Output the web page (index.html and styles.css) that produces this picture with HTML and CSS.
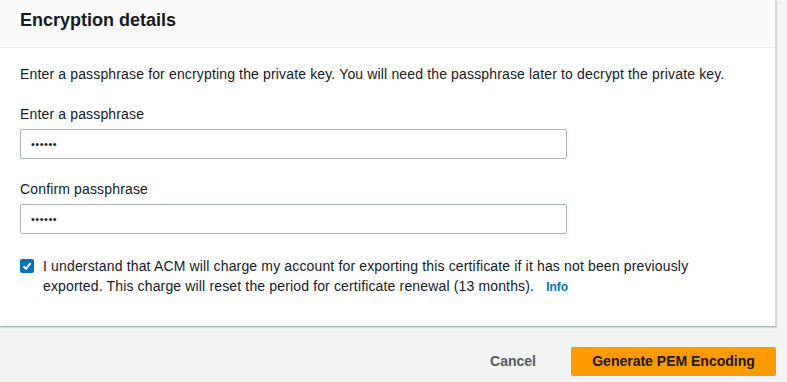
FILE: index.html
```html
<!DOCTYPE html>
<html lang="en">
<head>
  <meta charset="UTF-8">
  <meta name="viewport" content="width=device-width, initial-scale=1.0">
  <title>Export certificate</title>
  <link rel="stylesheet" href="styles.css">
</head>
<body>

<div class="panel">
  <div class="panel-header">
    <h2>Encryption details</h2>
  </div>

  <div class="panel-body">
    <p class="intro">Enter a passphrase for encrypting the private key. You will need the passphrase later to decrypt the private key.</p>

    <div class="field">
      <label for="passphrase">Enter a passphrase</label>
      <input type="password" id="passphrase" class="input-field" value="secret">
    </div>

    <div class="field">
      <label for="confirmPassphrase">Confirm passphrase</label>
      <input type="password" id="confirmPassphrase" class="input-field" value="secret">
    </div>

    <!-- Export charge acknowledgement -->
    <div class="ack">
      <span class="checkbox">
        <svg width="14" height="14" viewBox="0 0 14 14">
          <rect width="14" height="14" rx="2" fill="#0073bb"/>
          <path d="M3.5 7.2 L6 9.8 L10.6 4.2" fill="none" stroke="#fff" stroke-width="2"/>
        </svg>
      </span>
      <p>I understand that ACM will charge my account for exporting this certificate if it has not been previously exported. This charge will reset the period for certificate renewal (13 months). <a href="#" class="info-link">Info</a></p>
    </div>
  </div>
</div>

<div class="actions">
  <button class="cancel-btn">Cancel</button>
  <button class="primary-btn">Generate PEM Encoding</button>
</div>

</body>
</html>
```

FILE: styles.css
```css
body {
  margin: 0;
  font-family: "Liberation Sans", Arial, sans-serif;
  font-size: 14px;
  line-height: 20px;
  color: #16191f;
  background-color: #f2f3f3;
}

.panel {
  width: 775px;
  background-color: #fff;
  border-right: 1px solid #d5dbdb;
  border-bottom: 1px solid #aab7b8;
  box-shadow: 1px 1px 1px 0 rgba(0, 28, 36, 0.12);
}

.panel-header {
  height: 47px;
  background-color: #fafafa;
  border-bottom: 1px solid #eaeded;
  padding: 0 20px;
}

.panel-header h2 {
  margin: 0;
  padding-top: 8px;
  font-size: 18px;
  line-height: 24px;
  font-weight: bold;
}

.panel-body {
  padding: 16px 20px 29px;
  letter-spacing: 0.15px;
}

.intro {
  margin: 0 0 20px;
}

.field {
  margin-bottom: 20px;
}

.field label {
  display: block;
  margin-bottom: 5px;
}

.input-field {
  display: block;
  width: 547px;
  height: 30px;
  padding: 0 10px;
  border: 1px solid #aab7b8;
  border-radius: 2px;
  box-sizing: border-box;
  font-family: inherit;
  font-size: 11px;
  color: #16191f;
  letter-spacing: 0.5px;
}

.ack {
  display: flex;
  gap: 9px;
  padding-top: 2px;
}

.checkbox {
  flex: none;
  width: 14px;
  height: 14px;
  margin-top: 3px;
}

.checkbox svg {
  display: block;
}

.ack p {
  margin: 0;
  max-width: 690px;
}

.info-link {
  margin-left: 8px;
  font-size: 12px;
  font-weight: bold;
  letter-spacing: 0;
  color: #0073bb;
  text-decoration: none;
}

.actions {
  display: flex;
  justify-content: flex-end;
  gap: 15px;
  width: 776px;
  padding-top: 20px;
}

.actions button {
  font-family: inherit;
  font-size: 14px;
  font-weight: bold;
  line-height: 20px;
  border: none;
  border-radius: 2px;
  cursor: pointer;
  padding: 4px 20px 5px;
}

.cancel-btn {
  background-color: transparent;
  color: #545b64;
}

.primary-btn {
  width: 205px;
  background-color: #ff9900;
  color: #16191f;
}
```
